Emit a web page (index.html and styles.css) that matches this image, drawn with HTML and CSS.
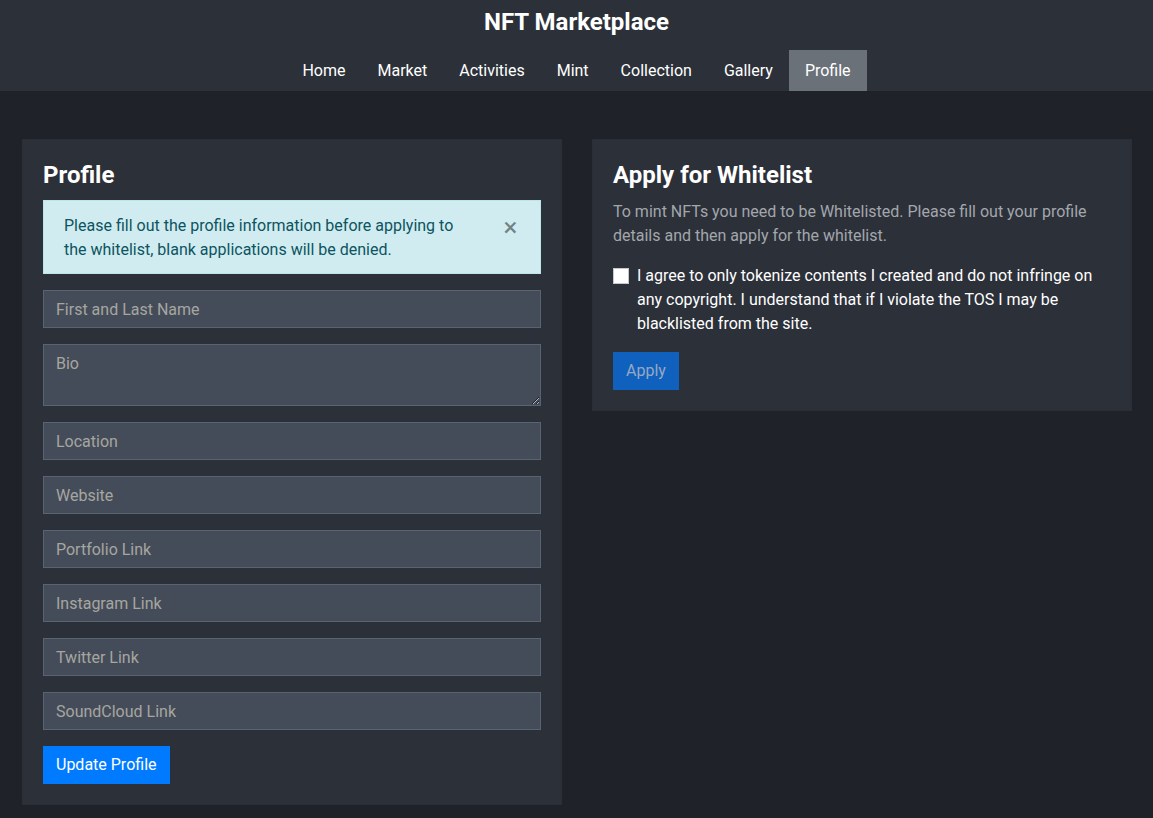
FILE: index.html
```html
<!DOCTYPE html>
<html>
<head>

    <meta charset="UTF-8">
    <title>NFT Marketplace</title>

    <meta name="viewport" content="width=device-width, initial-scale=1">

    <link rel="stylesheet" href="styles.css">

</head>
<body>

    <header class="site-header">
        <h1 class="site-title">NFT Marketplace</h1>
        <nav class="site-nav">
            <a href="#" class="nav-link">Home</a>
            <a href="#" class="nav-link">Market</a>
            <a href="#" class="nav-link">Activities</a>
            <a href="#" class="nav-link">Mint</a>
            <a href="#" class="nav-link">Collection</a>
            <a href="#" class="nav-link">Gallery</a>
            <a href="#" class="nav-link active">Profile</a>
        </nav>
    </header>

    <main class="page">

        <section class="card">
            <h2 class="card-title">Profile</h2>

            <div class="alert" role="alert">
                <p class="alert-text">Please fill out the profile information before applying to the whitelist, blank applications will be denied.</p>
                <button type="button" class="alert-close" aria-label="Close">&times;</button>
            </div>

            <form class="profile-form">
                <input type="text" class="field" placeholder="First and Last Name">
                <textarea class="field" rows="2" placeholder="Bio"></textarea>
                <input type="text" class="field" placeholder="Location">
                <input type="text" class="field" placeholder="Website">
                <input type="text" class="field" placeholder="Portfolio Link">
                <input type="text" class="field" placeholder="Instagram Link">
                <input type="text" class="field" placeholder="Twitter Link">
                <input type="text" class="field" placeholder="SoundCloud Link">
                <div>
                    <button type="button" class="btn btn-primary">Update Profile</button>
                </div>
            </form>
        </section>

        <section class="card card-short">
            <h2 class="card-title">Apply for Whitelist</h2>

            <p class="muted">To mint NFTs you need to be Whitelisted. Please fill out your profile details and then apply for the whitelist.</p>

            <label class="agree">
                <input type="checkbox" class="agree-box">
                <span>I agree to only tokenize contents I created and do not infringe on any copyright. I understand that if I violate the TOS I may be blacklisted from the site.</span>
            </label>

            <div>
                <button type="button" class="btn btn-disabled" disabled>Apply</button>
            </div>
        </section>

    </main>

</body>
</html>
```

FILE: styles.css
```css
html {
    box-sizing: border-box;
}

*,
*:before,
*:after {
    box-sizing: inherit;
}

body {
    margin: 0;
    min-height: 818px;
    background: #1f2229;
    color: #fff;
    font-family: "Segoe UI", Roboto, "Liberation Sans", sans-serif;
    font-size: 16px;
    line-height: 1.5;
}

/* header */

.site-header {
    background: #2c3139;
    padding-top: 8px;
    text-align: center;
}

.site-title {
    margin: 0 0 13px;
    font-size: 24px;
    line-height: 29px;
    font-weight: 700;
}

.site-nav {
    display: flex;
    justify-content: center;
}

.nav-link {
    display: block;
    padding: 8px 16px;
    color: #fff;
    text-decoration: none;
    line-height: 25px;
}

.nav-link.active {
    background: #6b7179;
}

/* cards */

.page {
    display: grid;
    grid-template-columns: 1fr 1fr;
    align-items: start;
    gap: 30px;
    padding: 48px 21px 0 22px;
}

.card {
    background: #2c3039;
    border: 1px solid #2a2e36;
    padding: 20px;
}

.card-title {
    margin: 0 0 10px;
    font-size: 24px;
    line-height: 30px;
    font-weight: 700;
}

.alert {
    display: flex;
    gap: 20px;
    align-items: flex-start;
    margin-bottom: 16px;
    padding: 13px 20px 11px;
    background: #d1ecf1;
    border: 1px solid #bee5eb;
    color: #0c5460;
}

.alert-text {
    flex: 1;
    margin: 0;
}

.alert-close {
    width: 24px;
    padding: 1px 0 0 5px;
    border: 0;
    background: none;
    color: #000;
    opacity: .45;
    font: 400 26px/24px "Segoe UI", Roboto, "Liberation Sans", sans-serif;
    cursor: pointer;
}

.profile-form {
    display: flex;
    flex-direction: column;
    gap: 16px;
}

.field {
    display: block;
    width: 100%;
    margin: 0;
    padding: 7px 12px 5px;
    background: #454c59;
    border: 1px solid #5a6372;
    border-radius: 0;
    color: #fff;
    font: inherit;
    line-height: 24px;
}

.field::placeholder {
    color: #a5a6a0;
}

textarea.field {
    height: 62px;
    resize: vertical;
}

.btn {
    padding: 6px 12px;
    border: 1px solid transparent;
    border-radius: 0;
    font: inherit;
    line-height: 24px;
    cursor: pointer;
}

.btn-primary {
    background: #007bff;
    color: #fff;
}

.btn-disabled {
    background: #1060be;
    color: #95a9c2;
    cursor: default;
}

/* whitelist */

.muted {
    margin: 0 0 16px;
    color: #a2a7ac;
}

.agree {
    display: flex;
    gap: 8px;
    margin-bottom: 16px;
}

.agree-box {
    flex: none;
    width: 16px;
    height: 16px;
    margin: 4px 0 0;
    appearance: none;
    background: #fff;
    border: 1px solid #c8c8c8;
}
```
